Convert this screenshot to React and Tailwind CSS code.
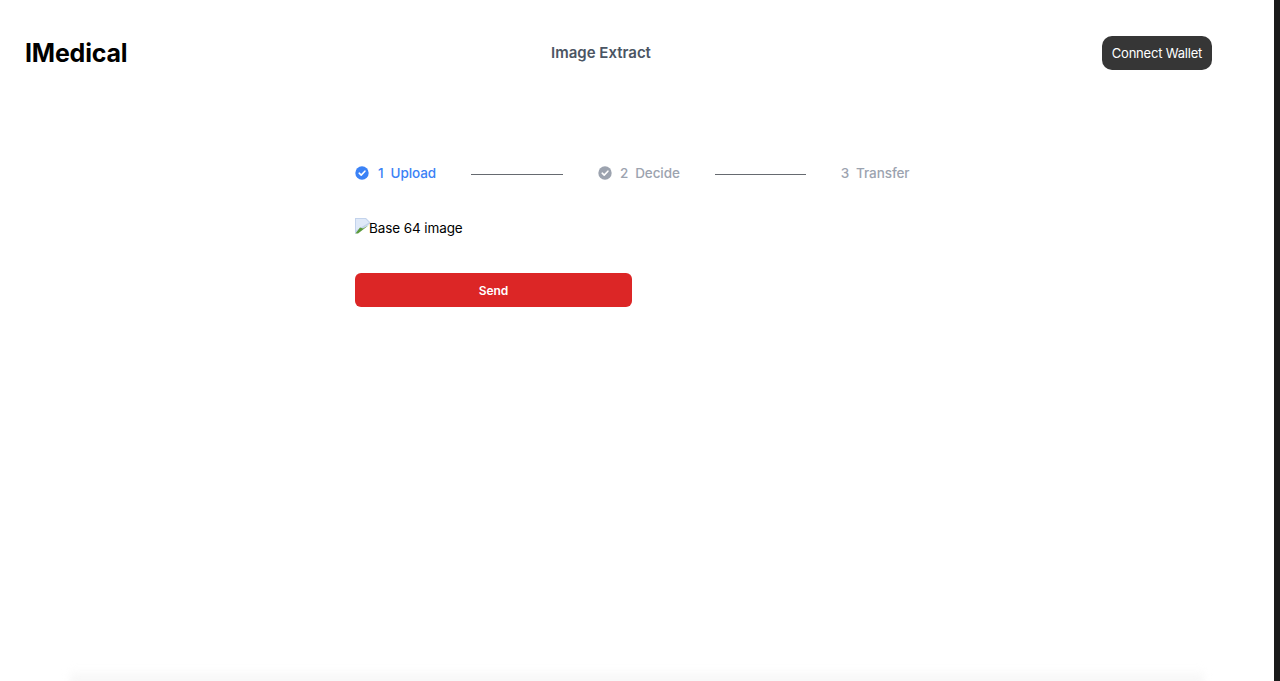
function Check({ color }) {
  return (
    <svg width="14" height="14" viewBox="0 0 14 14" className="shrink-0">
      <circle cx="7" cy="7" r="6.7" fill={color} />
      <path d="M4.2 7.2 L6.2 9.1 L9.9 5.2" fill="none" stroke="#fff" strokeWidth="1.6" strokeLinecap="round" strokeLinejoin="round" />
    </svg>
  );
}

function BrokenImage() {
  return (
    <svg width="16" height="16" viewBox="0 0 16 16" className="shrink-0 self-start">
      <path d="M0 0 H11 L16 5 L0 16 Z" fill="#c3d3ec" />
      <path d="M1 1 H10.5 L14 4.5 L1 12.5 Z" fill="#dfe9f8" />
      <path d="M0.5 15.5 L5 9.5 L8 10.5 L14 7 L3 15.5 Z" fill="#5b9a3c" />
      <path d="M8 15.5 L16 9.5 V15.5 Z" fill="#ffffff" />
    </svg>
  );
}

function Step({ n, label, active, icon }) {
  return (
    <div className={`flex items-center text-[13.5px] font-medium tracking-[-0.1px] ${active ? "text-[#3b82f6]" : "text-[#9ca3af]"}`}>
      {icon && <span className={`flex ${active ? "mr-[9px]" : "mr-2"}`}><Check color={active ? "#3b82f6" : "#9ca3af"} /></span>}
      <span className="mr-[7px]">{n}</span>
      <span>{label}</span>
    </div>
  );
}

export default function App() {
  return (
    <div className="flex h-[681px] w-[1280px] overflow-hidden bg-white font-['Inter',sans-serif]">
      <div className="relative h-full w-[1274px] bg-white">
        <header className="flex h-[105px] items-center pl-[25px]">
          <div className="mt-0.5 w-[526px] text-[25px] font-bold leading-none tracking-[-0.2px] text-black">IMedical</div>
          <div className="mt-0.5 text-[15px] font-semibold text-[#4b5563]">Image Extract</div>
          <button className="ml-[451px] h-[34px] w-[110px] rounded-[10px] bg-[#363636] pt-0.5 text-[13px] tracking-[-0.2px] text-white">Connect Wallet</button>
        </header>
        <main className="ml-[355px] w-[560px] pt-[58px]">
          <div className="flex h-5 items-center">
            <Step n="1" label="Upload" active icon />
            <div className="ml-[35px] mr-[35px] mt-0.5 h-px w-[92px] bg-[#666a70]" />
            <Step n="2" label="Decide" icon />
            <div className="ml-[35px] mr-[35px] mt-0.5 h-px w-[91px] bg-[#666a70]" />
            <Step n="3" label="Transfer" />
          </div>
          <div className="mt-[35px] flex h-4 items-start text-[13.5px] leading-5 tracking-[-0.1px] text-black">
            <BrokenImage />
            <span className="-ml-0.5">Base 64 image</span>
          </div>
          <button className="mt-[39px] block h-[34px] w-[277px] rounded-md bg-[#dc2626] pt-px text-xs font-semibold text-white">Send</button>
        </main>
        <div className="absolute inset-x-[70px] -bottom-1 h-4 bg-gradient-to-b from-transparent to-[#f2f2f2] blur-[4px]" />
      </div>
      <div className="h-full w-[6px] bg-[#1a1a1a]" />
    </div>
  );
}
